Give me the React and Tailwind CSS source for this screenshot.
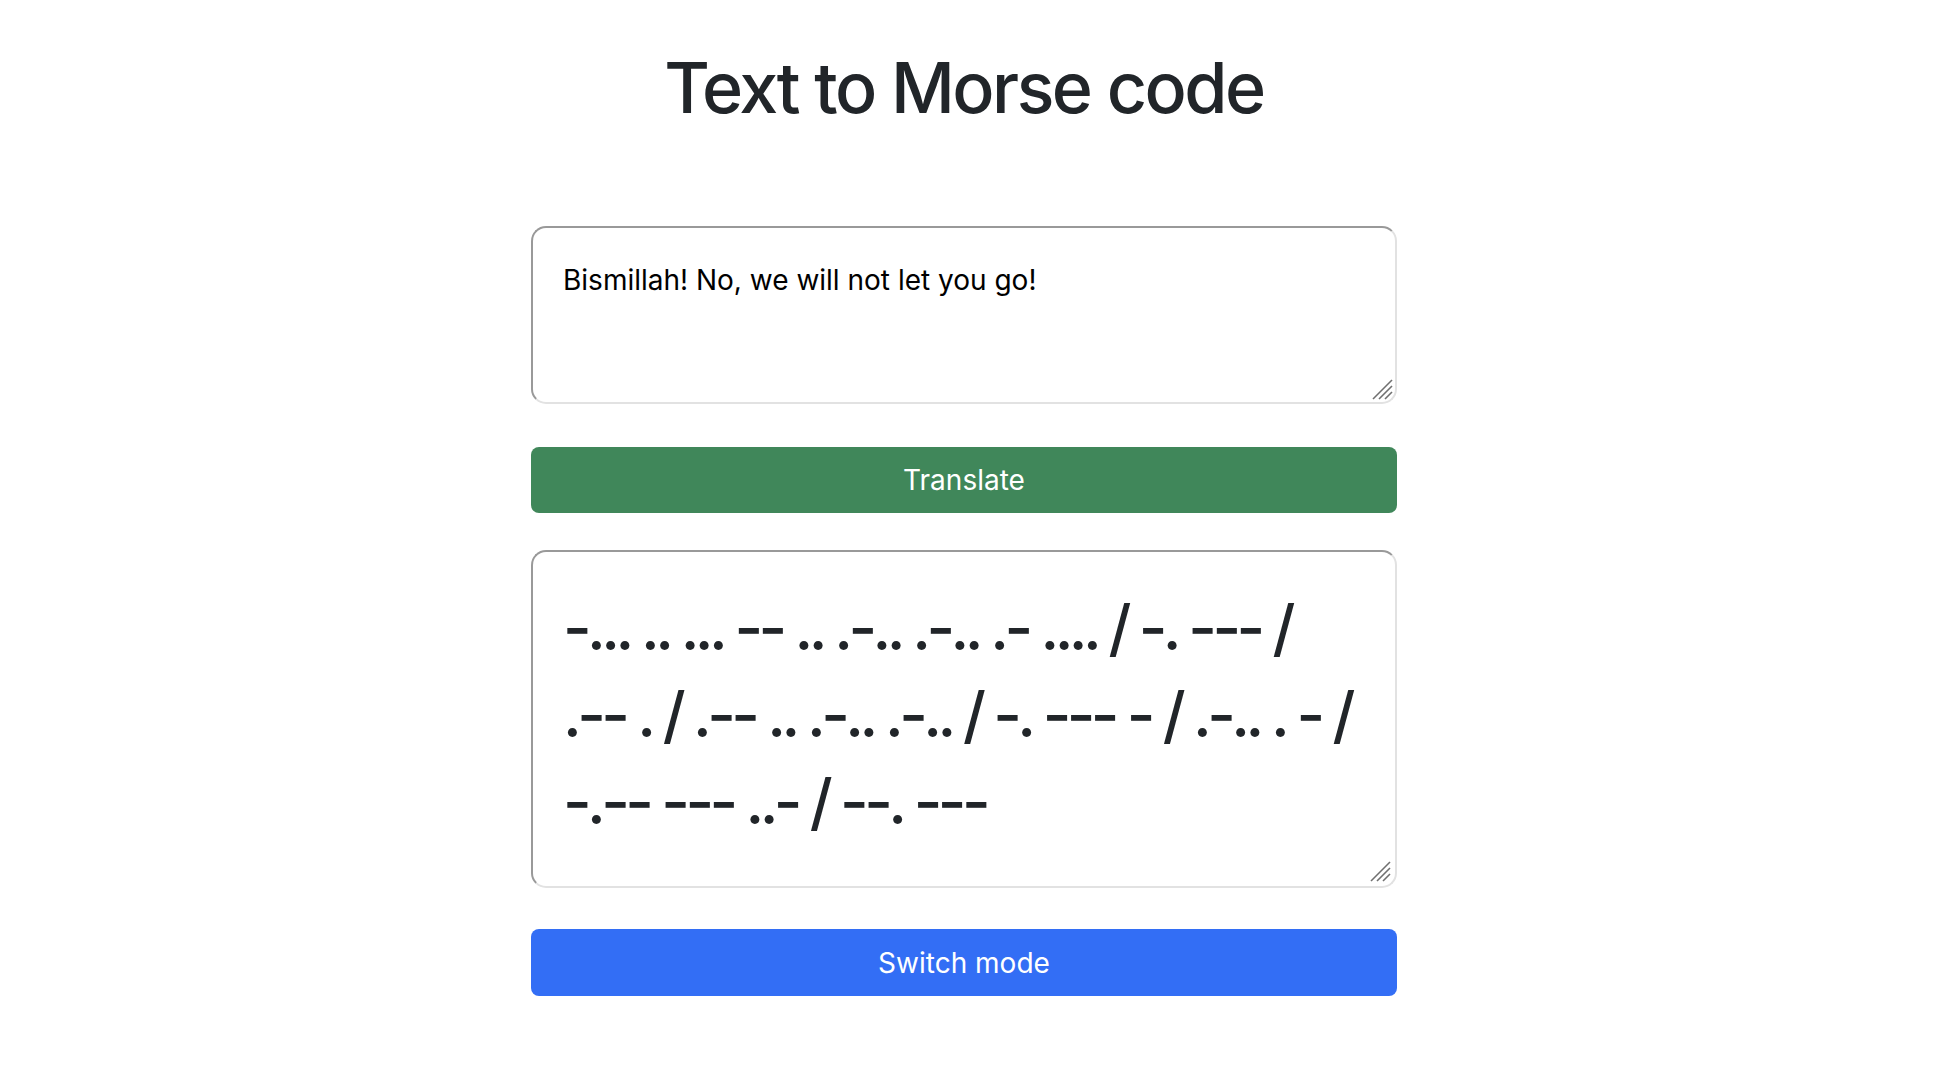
import React, { useState } from 'react';

const FONT = { fontFamily: 'Inter, "Noto Sans", "Liberation Sans", sans-serif' };

const ResizeGrip = () => (
  <svg
    className="absolute right-[4px] bottom-[4px] pointer-events-none"
    width="22"
    height="22"
    viewBox="0 0 22 22"
  >
    <line x1="2" y1="21" x2="21" y2="2" stroke="#707070" strokeWidth="1.6" />
    <line x1="8" y1="21" x2="21" y2="8" stroke="#707070" strokeWidth="1.6" />
    <line x1="14" y1="21" x2="21" y2="14" stroke="#707070" strokeWidth="1.6" />
  </svg>
);

// lines as they wrap in the output box
const MORSE_LINES = [
  '-... .. ... -- .. .-.. .-.. .- .... / -. --- /',
  '.-- . / .-- .. .-.. .-.. / -. --- - / .-.. . - /',
  '-.-- --- ..- / --. ---',
];

const App = () => {
  const [text, setText] = useState('Bismillah! No, we will not let you go!');

  return (
    <div className="min-h-screen bg-white pr-[22px]" style={FONT}>
      <div className="mx-auto w-[866px] pt-[45px]">
        <h1 className="text-center text-[70px] leading-[86px] font-medium text-[#212529] tracking-[-2.5px]">
          Text to Morse code
        </h1>

        <div className="relative mt-[95px]">
          <textarea
            value={text}
            onChange={(e) => setText(e.target.value)}
            className="block w-full h-[178px] resize-none rounded-[15px] border-2 border-t-[#999999] border-l-[#999999] border-r-[#e2e2e2] border-b-[#e2e2e2] bg-white px-[30px] pt-[31px] text-[28px] leading-[42px] text-black outline-none"
            style={FONT}
          />
          <ResizeGrip />
        </div>

        <button className="mt-[43px] flex h-[66px] w-full items-center justify-center rounded-[8px] bg-[#40875a] text-[28px] text-white">
          Translate
        </button>

        <div className="relative mt-[37px] h-[338px] rounded-[15px] border-2 border-t-[#999999] border-l-[#999999] border-r-[#e2e2e2] border-b-[#e2e2e2] bg-white px-[30px] pt-[32px]">
          <div className="text-[62px] leading-[87px] font-medium tracking-[-4.6px] text-[#212529] whitespace-pre">
            {MORSE_LINES.map((line) => (
              <div key={line}>{line}</div>
            ))}
          </div>
          <ResizeGrip />
        </div>

        <button className="mt-[41px] flex h-[67px] w-full items-center justify-center rounded-[8px] bg-[#336ef5] text-[28px] text-white">
          Switch mode
        </button>
      </div>
    </div>
  );
};

export default App;
